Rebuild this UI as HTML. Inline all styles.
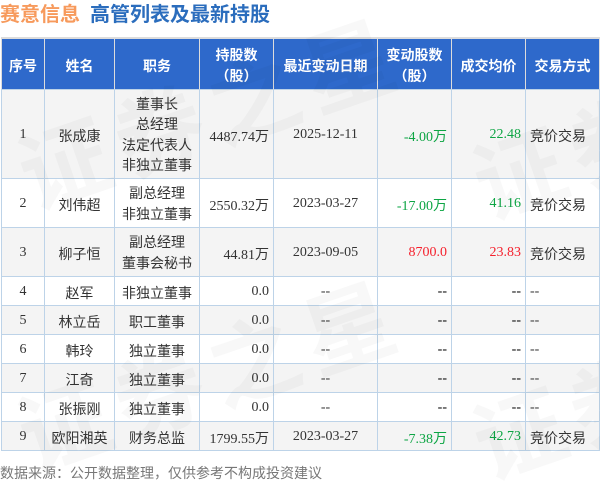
<!DOCTYPE html>
<html lang="zh"><head><meta charset="utf-8"><style>
html,body{margin:0;padding:0;background:#fff}
#p{position:relative;width:600px;height:481px;overflow:hidden;background:#fff;font-family:"Liberation Serif","Noto Sans CJK SC",serif;color:#333}
.t{position:absolute;left:0;top:1px;font:bold 20px/28px "Liberation Sans","Noto Sans CJK SC",sans-serif;white-space:nowrap}
table{position:absolute;left:1px;top:37px;border-collapse:collapse;table-layout:fixed;width:598px;font-size:14px;line-height:16px}
td,th{border:1px solid #bdd3e8;padding:8px 4px 0;text-align:center;overflow:hidden;white-space:nowrap;box-sizing:border-box}
td.m{padding-top:6px;line-height:20.3px}
th{background:#2e69cb;color:#fff;border:1px solid #dcdcdc;font:bold 14px/21px "Liberation Sans","Noto Sans CJK SC",sans-serif;border-bottom-color:#bdd3e8;padding-top:5px}
th{border-top:2px solid #dcdcdc}
tr.g td{background:#f4f4f4}
.r{text-align:right}.l{text-align:left}
.gn{color:#0da544}.rd{color:#f5212d}
.n{position:relative;top:-3px}
.k{color:#000}
.f{position:absolute;left:0;top:463px;font:14px/20px "Liberation Sans","Noto Sans CJK SC",sans-serif;color:#777;white-space:nowrap}
svg{position:absolute;left:0;top:0;pointer-events:none}
</style></head><body><div id="p">
<div class="t"><span style="color:#f79a5c">赛意信息</span><span style="color:#2b6dbd;margin-left:10px">高管列表及最新持股</span></div>
<table>
<colgroup><col style="width:43px"><col style="width:70px"><col style="width:85px"><col style="width:74px"><col style="width:104px"><col style="width:74px"><col style="width:74px"><col style="width:74px"></colgroup>
<tr style="height:51px"><th>序号</th><th>姓名</th><th>职务</th><th>持股数<br>（股）</th><th>最近变动日期</th><th>变动股数<br>（股）</th><th>成交均价</th><th>交易方式</th></tr>
<tr class="g" style="height:89px"><td><span class="n">1</span></td><td>张成康</td><td class="m">董事长<br>总经理<br>法定代表人<br>非独立董事</td><td class="r">4487.74万</td><td><span class="n">2025-12-11</span></td><td class="r gn">-4.00万</td><td class="r gn"><span class="n">22.48</span></td><td class="l">竞价交易</td></tr>
<tr style="height:49px"><td><span class="n">2</span></td><td>刘伟超</td><td class="m">副总经理<br>非独立董事</td><td class="r">2550.32万</td><td><span class="n">2023-03-27</span></td><td class="r gn">-17.00万</td><td class="r gn"><span class="n">41.16</span></td><td class="l">竞价交易</td></tr>
<tr class="g" style="height:49px"><td><span class="n">3</span></td><td>柳子恒</td><td class="m">副总经理<br>董事会秘书</td><td class="r">44.81万</td><td><span class="n">2023-09-05</span></td><td class="r rd"><span class="n">8700.0</span></td><td class="r rd"><span class="n">23.83</span></td><td class="l">竞价交易</td></tr>
<tr style="height:29px"><td><span class="n">4</span></td><td>赵军</td><td>非独立董事</td><td class="r"><span class="n">0.0</span></td><td><span class="n">--</span></td><td class="r k"><span class="n">--</span></td><td class="r k"><span class="n">--</span></td><td class="l"><span class="n">--</span></td></tr>
<tr class="g" style="height:29px"><td><span class="n">5</span></td><td>林立岳</td><td>职工董事</td><td class="r"><span class="n">0.0</span></td><td><span class="n">--</span></td><td class="r k"><span class="n">--</span></td><td class="r k"><span class="n">--</span></td><td class="l"><span class="n">--</span></td></tr>
<tr style="height:29px"><td><span class="n">6</span></td><td>韩玲</td><td>独立董事</td><td class="r"><span class="n">0.0</span></td><td><span class="n">--</span></td><td class="r k"><span class="n">--</span></td><td class="r k"><span class="n">--</span></td><td class="l"><span class="n">--</span></td></tr>
<tr class="g" style="height:29px"><td><span class="n">7</span></td><td>江奇</td><td>独立董事</td><td class="r"><span class="n">0.0</span></td><td><span class="n">--</span></td><td class="r k"><span class="n">--</span></td><td class="r k"><span class="n">--</span></td><td class="l"><span class="n">--</span></td></tr>
<tr style="height:29px"><td><span class="n">8</span></td><td>张振刚</td><td>独立董事</td><td class="r"><span class="n">0.0</span></td><td><span class="n">--</span></td><td class="r k"><span class="n">--</span></td><td class="r k"><span class="n">--</span></td><td class="l"><span class="n">--</span></td></tr>
<tr class="g" style="height:29px"><td><span class="n">9</span></td><td>欧阳湘英</td><td>财务总监</td><td class="r">1799.55万</td><td><span class="n">2023-03-27</span></td><td class="r gn">-7.38万</td><td class="r gn"><span class="n">42.73</span></td><td class="l">竞价交易</td></tr>
</table>
<svg width="600" height="481" viewBox="0 0 600 481">
<g fill="#000" fill-opacity=".026" font-family="Liberation Sans,Noto Sans CJK SC,sans-serif" font-size="90" font-weight="bold" letter-spacing="10">
<text transform="translate(33,210) rotate(-19)">证券之星</text>
<text transform="translate(33,472) rotate(-19)">证券之星</text>
<text transform="translate(488,220) rotate(-19)">证券之星</text>
<text transform="translate(488,480) rotate(-19)">证券之星</text>
</g></svg>
<div class="f">数据来源：公开数据整理，仅供参考不构成投资建议</div>
</div></body></html>
